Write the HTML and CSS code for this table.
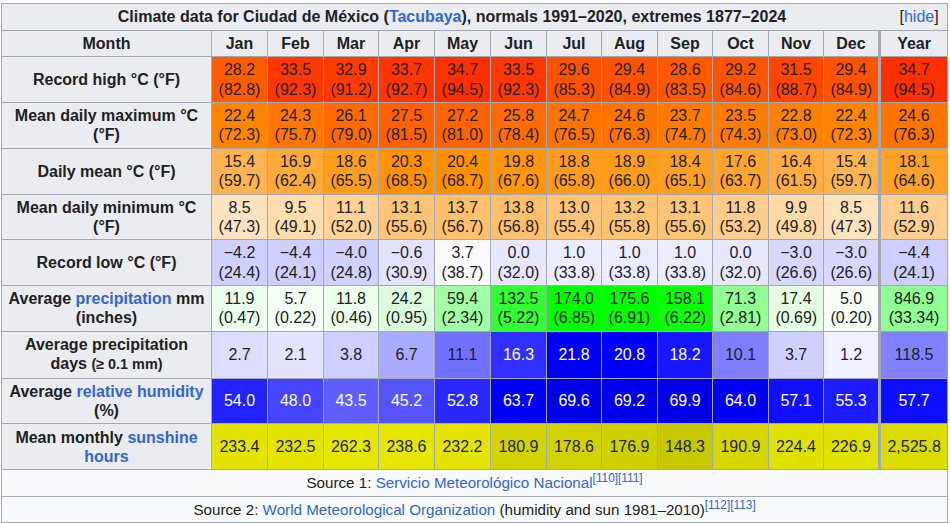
FILE: index.html
```
<!DOCTYPE html>
<html lang="en">
<head>
<meta charset="utf-8">
<title>Climate data for Ciudad de México</title>
<link rel="stylesheet" href="styles.css">
</head>
<body>
<table class="climate">
<colgroup>
<col class="w210"><col class="w56"><col class="w56"><col class="w55"><col class="w56"><col class="w56"><col class="w56"><col class="w55"><col class="w56"><col class="w55"><col class="w56"><col class="w55"><col class="w56"><col class="w68">
</colgroup>
<tr><th colspan="14" class="title"><span class="toggle">[<a href="#">hide</a>]</span>Climate data for Ciudad de México (<a href="#">Tacubaya</a>), normals 1991–2020, extremes 1877–2024</th></tr>
<tr><th>Month</th><th>Jan</th><th>Feb</th><th>Mar</th><th>Apr</th><th>May</th><th>Jun</th><th>Jul</th><th>Aug</th><th>Sep</th><th>Oct</th><th>Nov</th><th>Dec</th><th class="year">Year</th></tr>
<tr><th class="label">Record high °C (°F)</th>
<td style="background:rgb(255,92,0)">28.2<br>(82.8)</td>
<td style="background:rgb(255,55,0)">33.5<br>(92.3)</td>
<td style="background:rgb(255,59,0)">32.9<br>(91.2)</td>
<td style="background:rgb(255,54,0)">33.7<br>(92.7)</td>
<td style="background:rgb(255,47,0)">34.7<br>(94.5)</td>
<td style="background:rgb(255,55,0)">33.5<br>(92.3)</td>
<td style="background:rgb(255,82,0)">29.6<br>(85.3)</td>
<td style="background:rgb(255,83,0)">29.4<br>(84.9)</td>
<td style="background:rgb(255,89,0)">28.6<br>(83.5)</td>
<td style="background:rgb(255,85,0)">29.2<br>(84.6)</td>
<td style="background:rgb(255,69,0)">31.5<br>(88.7)</td>
<td style="background:rgb(255,83,0)">29.4<br>(84.9)</td>
<td class="year" style="background:rgb(255,47,0)">34.7<br>(94.5)</td></tr>
<tr><th class="label">Mean daily maximum °C<br>(°F)</th>
<td style="background:rgb(255,132,0)">22.4<br>(72.3)</td>
<td style="background:rgb(255,119,0)">24.3<br>(75.7)</td>
<td style="background:rgb(255,106,0)">26.1<br>(79.0)</td>
<td style="background:rgb(255,96,0)">27.5<br>(81.5)</td>
<td style="background:rgb(255,99,0)">27.2<br>(81.0)</td>
<td style="background:rgb(255,108,0)">25.8<br>(78.4)</td>
<td style="background:rgb(255,116,0)">24.7<br>(76.5)</td>
<td style="background:rgb(255,116,0)">24.6<br>(76.3)</td>
<td style="background:rgb(255,123,0)">23.7<br>(74.7)</td>
<td style="background:rgb(255,124,0)">23.5<br>(74.3)</td>
<td style="background:rgb(255,129,0)">22.8<br>(73.0)</td>
<td style="background:rgb(255,132,0)">22.4<br>(72.3)</td>
<td class="year" style="background:rgb(255,116,0)">24.6<br>(76.3)</td></tr>
<tr><th class="label">Daily mean °C (°F)</th>
<td style="background:rgb(255,180,81)">15.4<br>(59.7)</td>
<td style="background:rgb(255,170,57)">16.9<br>(62.4)</td>
<td style="background:rgb(255,158,30)">18.6<br>(65.5)</td>
<td style="background:rgb(255,146,3)">20.3<br>(68.5)</td>
<td style="background:rgb(255,145,2)">20.4<br>(68.7)</td>
<td style="background:rgb(255,150,11)">19.8<br>(67.6)</td>
<td style="background:rgb(255,156,27)">18.8<br>(65.8)</td>
<td style="background:rgb(255,156,26)">18.9<br>(66.0)</td>
<td style="background:rgb(255,159,33)">18.4<br>(65.1)</td>
<td style="background:rgb(255,165,46)">17.6<br>(63.7)</td>
<td style="background:rgb(255,173,65)">16.4<br>(61.5)</td>
<td style="background:rgb(255,180,81)">15.4<br>(59.7)</td>
<td class="year" style="background:rgb(255,161,38)">18.1<br>(64.6)</td></tr>
<tr><th class="label">Mean daily minimum °C<br>(°F)</th>
<td style="background:rgb(255,227,191)">8.5<br>(47.3)</td>
<td style="background:rgb(255,221,175)">9.5<br>(49.1)</td>
<td style="background:rgb(255,210,150)">11.1<br>(52.0)</td>
<td style="background:rgb(255,196,118)">13.1<br>(55.6)</td>
<td style="background:rgb(255,192,108)">13.7<br>(56.7)</td>
<td style="background:rgb(255,191,107)">13.8<br>(56.8)</td>
<td style="background:rgb(255,196,120)">13.0<br>(55.4)</td>
<td style="background:rgb(255,195,116)">13.2<br>(55.8)</td>
<td style="background:rgb(255,196,118)">13.1<br>(55.6)</td>
<td style="background:rgb(255,205,139)">11.8<br>(53.2)</td>
<td style="background:rgb(255,218,169)">9.9<br>(49.8)</td>
<td style="background:rgb(255,227,191)">8.5<br>(47.3)</td>
<td class="year" style="background:rgb(255,206,142)">11.6<br>(52.9)</td></tr>
<tr><th class="label">Record low °C (°F)</th>
<td style="background:rgb(208,208,255)">−4.2<br>(24.4)</td>
<td style="background:rgb(207,207,255)">−4.4<br>(24.1)</td>
<td style="background:rgb(209,209,255)">−4.0<br>(24.8)</td>
<td style="background:rgb(227,227,255)">−0.6<br>(30.9)</td>
<td style="background:rgb(251,251,255)">3.7<br>(38.7)</td>
<td style="background:rgb(231,231,255)">0.0<br>(32.0)</td>
<td style="background:rgb(236,236,255)">1.0<br>(33.8)</td>
<td style="background:rgb(236,236,255)">1.0<br>(33.8)</td>
<td style="background:rgb(236,236,255)">1.0<br>(33.8)</td>
<td style="background:rgb(231,231,255)">0.0<br>(32.0)</td>
<td style="background:rgb(215,215,255)">−3.0<br>(26.6)</td>
<td style="background:rgb(215,215,255)">−3.0<br>(26.6)</td>
<td class="year" style="background:rgb(207,207,255)">−4.4<br>(24.1)</td></tr>
<tr><th class="label">Average <a href="#">precipitation</a> mm<br>(inches)</th>
<td style="background:rgb(237,255,237)">11.9<br>(0.47)</td>
<td style="background:rgb(246,255,246)">5.7<br>(0.22)</td>
<td style="background:rgb(237,255,237)">11.8<br>(0.46)</td>
<td style="background:rgb(218,255,218)">24.2<br>(0.95)</td>
<td style="background:rgb(163,255,163)">59.4<br>(2.34)</td>
<td style="background:rgb(50,255,50)">132.5<br>(5.22)</td>
<td style="background:rgb(0,255,0)">174.0<br>(6.85)</td>
<td style="background:rgb(0,255,0)">175.6<br>(6.91)</td>
<td style="background:rgb(11,255,11)">158.1<br>(6.22)</td>
<td style="background:rgb(145,255,145)">71.3<br>(2.81)</td>
<td style="background:rgb(228,255,228)">17.4<br>(0.69)</td>
<td style="background:rgb(247,255,247)">5.0<br>(0.20)</td>
<td class="year" style="background:rgb(146,255,146)">846.9<br>(33.34)</td></tr>
<tr><th class="label">Average precipitation<br>days <span class="small">(≥ 0.1 mm)</span></th>
<td style="background:rgb(221,221,255)">2.7</td>
<td style="background:rgb(228,228,255)">2.1</td>
<td style="background:rgb(207,207,255)">3.8</td>
<td style="background:rgb(170,170,255)">6.7</td>
<td style="background:rgb(113,113,255)">11.1</td>
<td class="light" style="background:rgb(47,47,255)">16.3</td>
<td class="light" style="background:rgb(0,0,245)">21.8</td>
<td class="light" style="background:rgb(0,0,250)">20.8</td>
<td class="light" style="background:rgb(23,23,255)">18.2</td>
<td style="background:rgb(126,126,255)">10.1</td>
<td style="background:rgb(208,208,255)">3.7</td>
<td style="background:rgb(240,240,255)">1.2</td>
<td class="year" style="background:rgb(129,129,255)">118.5</td></tr>
<tr><th class="label">Average <a href="#">relative humidity</a><br>(%)</th>
<td class="light" style="background:rgb(34,34,255)">54.0</td>
<td class="light" style="background:rgb(68,68,255)">48.0</td>
<td class="light" style="background:rgb(94,94,255)">43.5</td>
<td class="light" style="background:rgb(84,84,255)">45.2</td>
<td class="light" style="background:rgb(41,41,255)">52.8</td>
<td class="light" style="background:rgb(0,0,246)">63.7</td>
<td class="light" style="background:rgb(0,0,231)">69.6</td>
<td class="light" style="background:rgb(0,0,232)">69.2</td>
<td class="light" style="background:rgb(0,0,230)">69.9</td>
<td class="light" style="background:rgb(0,0,245)">64.0</td>
<td class="light" style="background:rgb(16,16,255)">57.1</td>
<td class="light" style="background:rgb(27,27,255)">55.3</td>
<td class="year light" style="background:rgb(13,13,255)">57.7</td></tr>
<tr><th class="label">Mean monthly <a href="#">sunshine</a><br><a href="#">hours</a></th>
<td style="background:rgb(228,228,0)">233.4</td>
<td style="background:rgb(228,228,0)">232.5</td>
<td style="background:rgb(230,230,0)">262.3</td>
<td style="background:rgb(230,230,0)">238.6</td>
<td style="background:rgb(228,228,0)">232.2</td>
<td style="background:rgb(211,211,0)">180.9</td>
<td style="background:rgb(210,210,0)">178.6</td>
<td style="background:rgb(209,209,0)">176.9</td>
<td style="background:rgb(200,200,0)">148.3</td>
<td style="background:rgb(214,214,0)">190.9</td>
<td style="background:rgb(225,225,0)">224.4</td>
<td style="background:rgb(226,226,0)">226.9</td>
<td class="year" style="background:rgb(220,220,0)">2,525.8</td></tr>
<tr><td colspan="14" class="src">Source 1: <a href="#">Servicio Meteorológico Nacional</a><sup><a href="#">[110]</a><a href="#">[111]</a></sup></td></tr>
<tr><td colspan="14" class="src">Source 2: <a href="#">World Meteorological Organization</a> (humidity and sun 1981–2010)<sup><a href="#">[112]</a><a href="#">[113]</a></sup></td></tr>
</table>
</body>
</html>
```

FILE: styles.css
```
body {
  margin: 0;
  background: #ffffff;
  color: #202122;
  font-family: "Liberation Sans", Arial, sans-serif;
}

a {
  color: #3366cc;
  text-decoration: none;
}

.climate {
  border-collapse: collapse;
  table-layout: fixed;
  width: 947px;
  margin: 3px 0 0 1px;
  font-size: 16px;
  line-height: 1.2em;
  text-align: center;
  color: #202122;
  background: #f8f9fa;
  border: 1px solid #a2a9b1;
}

.w210 { width: 210px; }
.w56 { width: 56px; }
.w55 { width: 55px; }
.w68 { width: 68px; }

.climate th,
.climate td {
  border: 1px solid #a2a9b1;
  padding: 0.2em 0.4em;
  white-space: nowrap;
}

.climate th {
  background: #eaecf0;
  font-weight: bold;
}

.climate .year {
  border-left: 3px solid #a2a9b1;
}

.toggle {
  float: right;
  font-weight: normal;
  margin: 0 2px 0 4px;
}

.small {
  font-size: 90%;
}

.light {
  color: #ffffff;
}

.climate .src {
  background: #f8f9fa;
  font-size: 95%;
}

sup {
  font-size: 78%;
  line-height: 1;
}
```
